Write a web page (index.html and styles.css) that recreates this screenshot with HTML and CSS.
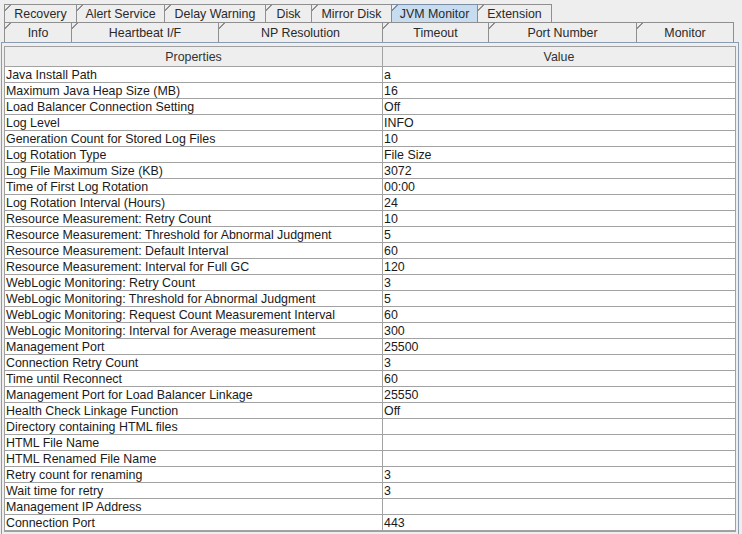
FILE: index.html
```html
<!DOCTYPE html>
<html>
<head>
<meta charset="utf-8">
<link rel="stylesheet" href="styles.css">
</head>
<body>
<div class="tabs">
  <div class="tabrow row1">
    <div class="tab w-recovery">Recovery</div>
    <div class="tab w-alert">Alert Service</div>
    <div class="tab w-delay">Delay Warning</div>
    <div class="tab w-disk">Disk</div>
    <div class="tab w-mirror">Mirror Disk</div>
    <div class="tab w-jvm selected">JVM Monitor</div>
    <div class="tab w-ext">Extension</div>
  </div>
  <div class="tabrow row2">
    <div class="tab w-info">Info</div>
    <div class="tab w-hb">Heartbeat I/F</div>
    <div class="tab w-np">NP Resolution</div>
    <div class="tab w-timeout">Timeout</div>
    <div class="tab w-port">Port Number</div>
    <div class="tab w-monitor">Monitor</div>
  </div>
</div>
<div class="panel">
  <div class="grid">
    <div class="row head"><div class="cell">Properties</div><div class="cell">Value</div></div>
    <div class="row"><div class="cell">Java Install Path</div><div class="cell">a</div></div>
    <div class="row"><div class="cell">Maximum Java Heap Size (MB)</div><div class="cell">16</div></div>
    <div class="row"><div class="cell">Load Balancer Connection Setting</div><div class="cell">Off</div></div>
    <div class="row"><div class="cell">Log Level</div><div class="cell">INFO</div></div>
    <div class="row"><div class="cell">Generation Count for Stored Log Files</div><div class="cell">10</div></div>
    <div class="row"><div class="cell">Log Rotation Type</div><div class="cell">File Size</div></div>
    <div class="row"><div class="cell">Log File Maximum Size (KB)</div><div class="cell">3072</div></div>
    <div class="row"><div class="cell">Time of First Log Rotation</div><div class="cell">00:00</div></div>
    <div class="row"><div class="cell">Log Rotation Interval (Hours)</div><div class="cell">24</div></div>
    <div class="row"><div class="cell">Resource Measurement: Retry Count</div><div class="cell">10</div></div>
    <div class="row"><div class="cell">Resource Measurement: Threshold for Abnormal Judgment</div><div class="cell">5</div></div>
    <div class="row"><div class="cell">Resource Measurement: Default Interval</div><div class="cell">60</div></div>
    <div class="row"><div class="cell">Resource Measurement: Interval for Full GC</div><div class="cell">120</div></div>
    <div class="row"><div class="cell">WebLogic Monitoring: Retry Count</div><div class="cell">3</div></div>
    <div class="row"><div class="cell">WebLogic Monitoring: Threshold for Abnormal Judgment</div><div class="cell">5</div></div>
    <div class="row"><div class="cell">WebLogic Monitoring: Request Count Measurement Interval</div><div class="cell">60</div></div>
    <div class="row"><div class="cell">WebLogic Monitoring: Interval for Average measurement</div><div class="cell">300</div></div>
    <div class="row"><div class="cell">Management Port</div><div class="cell">25500</div></div>
    <div class="row"><div class="cell">Connection Retry Count</div><div class="cell">3</div></div>
    <div class="row"><div class="cell">Time until Reconnect</div><div class="cell">60</div></div>
    <div class="row"><div class="cell">Management Port for Load Balancer Linkage</div><div class="cell">25550</div></div>
    <div class="row"><div class="cell">Health Check Linkage Function</div><div class="cell">Off</div></div>
    <div class="row"><div class="cell">Directory containing HTML files</div><div class="cell"></div></div>
    <div class="row"><div class="cell">HTML File Name</div><div class="cell"></div></div>
    <div class="row"><div class="cell">HTML Renamed File Name</div><div class="cell"></div></div>
    <div class="row"><div class="cell">Retry count for renaming</div><div class="cell">3</div></div>
    <div class="row"><div class="cell">Wait time for retry</div><div class="cell">3</div></div>
    <div class="row"><div class="cell">Management IP Address</div><div class="cell"></div></div>
    <div class="row"><div class="cell">Connection Port</div><div class="cell">443</div></div>
  </div>
</div>
</body>
</html>
```
FILE: styles.css
```css
html, body {
  margin: 0;
  padding: 0;
  background: #eeeeee;
  font-family: "Liberation Sans", Arial, sans-serif;
  font-size: 12.4px;
  color: #222222;
  overflow: hidden;
}

.tabs {
  padding-top: 4px;
}

.tabrow {
  display: flex;
  padding-left: 4px;
}

.row1 { height: 18px; }
.row2 { height: 20px; }

.tab {
  position: relative;
  box-sizing: border-box;
  border: 1px solid #8f8f8f;
  border-bottom: none;
  border-right: none;
  background: #eeeeee;
  text-align: center;
  color: #2a2a2a;
  line-height: 19px;
  white-space: nowrap;
  overflow: hidden;
}
.row2 .tab { line-height: 21px; }

.tab:last-child { border-right: 1px solid #8f8f8f; }

.tab::before {
  content: "";
  position: absolute;
  left: -1px;
  top: -1px;
  width: 7px;
  height: 7px;
  background: linear-gradient(to bottom right, #eeeeee 0 44%, #8f8f8f 44% 58%, transparent 58%);
}

.tab.selected {
  background: #c8dcf0;
  border-color: #7a8ea8;
  border-right: 1px solid #7a8ea8;
}
.tab.selected::before {
  background: linear-gradient(to bottom right, #eeeeee 0 44%, #7a8ea8 44% 58%, transparent 58%);
}
.tab.selected + .tab { border-left: none; }

.w-recovery { width: 72px; }
.w-alert { width: 88px; }
.w-delay { width: 101px; }
.w-disk { width: 46px; }
.w-mirror { width: 80px; }
.w-jvm { width: 87px; }
.w-ext { width: 74px; }

.w-info { width: 67px; }
.w-hb { width: 147px; }
.w-np { width: 164px; }
.w-timeout { width: 106px; }
.w-port { width: 148px; }
.w-monitor { width: 98px; }

.panel {
  box-sizing: border-box;
  width: 738px;
  margin-left: 1px;
  border: 1px solid #8a9cb4;
  border-bottom: none;
  padding: 3px 2px 0 2px;
  height: 500px;
}

.grid {
  box-sizing: border-box;
  width: 732px;
  border: 1px solid #a0a0a0;
  background: #ffffff;
}

.row {
  display: grid;
  grid-template-columns: 378px 1fr;
  height: 16px;
  box-sizing: border-box;
  border-bottom: 1px solid #a2a2a2;
  line-height: 17px;
  overflow: hidden;
}

.cell {
  padding-left: 1px;
  white-space: nowrap;
  overflow: hidden;
  color: #1a1a1a;
}

.cell:first-child {
  border-right: 1px solid #a2a2a2;
}

.row.head {
  height: 20px;
  line-height: 21px;
  background: #eeeeee;
  border-bottom: 1px solid #a2a2a2;
}

.row.head .cell {
  text-align: center;
  padding-left: 0;
  color: #333333;
}
```
